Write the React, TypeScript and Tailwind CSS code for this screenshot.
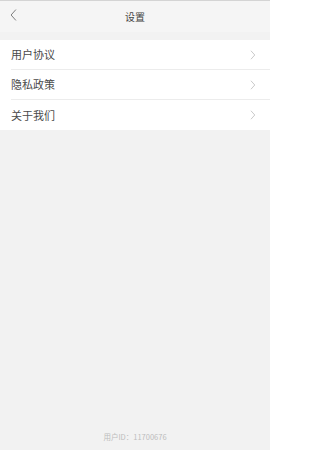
const rows = ['用户协议', '隐私政策', '关于我们'];

function Chevron({ className }: { className?: string }) {
  return (
    <svg viewBox="0 0 8 14" className={className} fill="none" stroke="currentColor" strokeWidth="1.1" strokeLinecap="round" strokeLinejoin="round">
      <path d="M1.5 1.5 L6.5 7 L1.5 12.5" />
    </svg>
  );
}

export default function App() {
  return (
    <div
      className="w-[270px] h-[450px] bg-[#f2f2f2] flex flex-col overflow-hidden"
      style={{ fontFamily: '"Noto Sans CJK SC", "Liberation Sans", sans-serif' }}
    >
      <div className="h-[1px] bg-[#d4d4d4]" />
      <div className="relative h-[31px] bg-[#f5f5f5] flex items-center justify-center">
        <svg viewBox="0 0 8 14" className="absolute left-[10px] top-[8px] w-[7px] h-[12px] text-[#777]" fill="none" stroke="currentColor" strokeWidth="1.1" strokeLinecap="round" strokeLinejoin="round">
          <path d="M6.5 1 L1.2 7 L6.5 13" />
        </svg>
        <span className="text-[10px] text-[#444] leading-none">设置</span>
      </div>
      <div className="h-[8px]" />
      <div className="bg-white pl-[11px]">
        {rows.map((r, i) => (
          <div
            key={r}
            className={`h-[30px] flex items-center justify-between pr-[14px] ${i < rows.length - 1 ? 'border-b border-[#ececec]' : ''}`}
          >
            <span className="text-[11px] text-[#4a4a4a] leading-none">{r}</span>
            <Chevron className="w-[6px] h-[10px] text-[#bbb]" />
          </div>
        ))}
      </div>
      <div className="flex-1" />
      <div className="h-[17px] flex items-start justify-center">
        <span className="text-[7.5px] text-[#bdbdbd] leading-none">用户ID：11700676</span>
      </div>
    </div>
  );
}
